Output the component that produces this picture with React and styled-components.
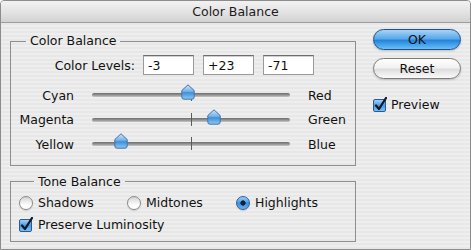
import React from 'react';
import styled, { createGlobalStyle } from 'styled-components';

const GlobalStyle = createGlobalStyle`
  html, body { margin: 0; padding: 0; background: #fff; }
  body { font-family: "DejaVu Sans", "Liberation Sans", sans-serif; font-size: 12px; color: #111; }
`;

const levels = [-3, 23, -71];
const sliders = [
  { left: 'Cyan', right: 'Red', value: -3 },
  { left: 'Magenta', right: 'Green', value: 23 },
  { left: 'Yellow', right: 'Blue', value: -71 },
];

const Window = styled.div`
  width: 471px;
  height: 250px;
  box-sizing: border-box;
  border: 1px solid #8c8c8c;
  border-top-left-radius: 4px;
  border-top-right-radius: 4px;
  overflow: hidden;
  background: repeating-linear-gradient(to bottom, #eeeeee 0 2px, #e7e7e7 2px 4px);
  display: flex;
  flex-direction: column;
`;

const TitleBar = styled.div`
  height: 21px;
  flex: none;
  border-bottom: 1px solid #9c9c9c;
  background: linear-gradient(to bottom, #f2f2f2 0%, #e4e4e4 50%, #d2d2d2 100%);
  display: flex;
  align-items: center;
  justify-content: center;
  font-size: 12.5px;
  color: #1a1a1a;
`;

const Body = styled.div`
  display: flex;
  padding: 11px 0 0 9px;
`;

const LeftColumn = styled.div`
  width: 346px;
  display: flex;
  flex-direction: column;
`;

const Group = styled.fieldset`
  margin: ${p => p.$top || 0}px 0 0 0;
  padding: ${p => p.$pad};
  border: 1px solid #8e8e8e;
  min-width: 0;
`;

const Legend = styled.legend`
  margin-left: 15px;
  padding: 0 4px;
  line-height: 14px;
  font-size: 12.5px;
`;

const LevelsRow = styled.div`
  display: flex;
  align-items: center;
  gap: 9px;
  height: 20px;
`;

const LevelsLabel = styled.span`
  width: 124px;
  margin-right: -1px;
  text-align: right;
  font-size: 12.5px;
`;

const LevelInput = styled.div`
  width: 51px;
  height: 20px;
  box-sizing: border-box;
  background: #fff;
  border: 1px solid #9a9a9a;
  border-top-color: #6e6e6e;
  box-shadow: inset 0 1px 0 #d0d0d0;
  padding: 0 4px;
  display: flex;
  align-items: center;
  font-size: 12.5px;
`;

const SliderGrid = styled.div`
  margin-top: 8px;
  display: grid;
  grid-template-columns: 63px 198px auto;
  column-gap: 18px;
  grid-auto-rows: 24.5px;
  align-items: center;
`;

const SideLabel = styled.span`
  text-align: ${p => (p.$right ? 'left' : 'right')};
  font-size: 12.5px;
`;

const Track = styled.div`
  position: relative;
  height: 4px;
  border-radius: 2px;
  background: linear-gradient(to bottom, #6c6c6c, #9c9c9c 60%, #c8c8c8);
`;

const Tick = styled.div`
  position: absolute;
  left: 99px;
  top: -5px;
  width: 1px;
  height: 13px;
  background: #5a5a5a;
`;

const Thumb = styled.svg`
  position: absolute;
  top: -9px;
  width: 14px;
  height: 16px;
  margin-left: -7px;
`;

const ToneRow = styled.div`
  display: grid;
  grid-template-columns: 108px 109px auto;
  height: 18px;
  align-items: center;
`;

const Choice = styled.label`
  display: flex;
  align-items: center;
  gap: 5px;
  font-size: 12.5px;
  height: 18px;
`;

const Radio = styled.span`
  width: 14px;
  height: 14px;
  border-radius: 50%;
  box-sizing: border-box;
  border: 1px solid ${p => (p.$on ? '#2f5f98' : '#8a8a8a')};
  background: ${p =>
    p.$on
      ? 'radial-gradient(circle at 50% 50%, #10233d 0 2.4px, transparent 2.8px), linear-gradient(to bottom, #9fd0f5, #3b8ee0 55%, #6ab4f3)'
      : 'linear-gradient(to bottom, #d4d4d4, #ffffff 70%)'};
  box-shadow: 0 1px 1px rgba(0,0,0,0.15);
`;

const CheckBox = styled.svg`
  width: 14px;
  height: 15px;
  flex: none;
`;

const RightColumn = styled.div`
  margin: -5px 0 0 17px;
  width: 88px;
  display: flex;
  flex-direction: column;
`;

const AquaButton = styled.div`
  height: 21px;
  box-sizing: border-box;
  border-radius: 11px;
  margin-bottom: 8px;
  display: flex;
  align-items: center;
  justify-content: center;
  font-size: 12.5px;
  color: #111;
  border: 1px solid ${p => (p.$primary ? '#1f4f8c' : '#7c7c7c')};
  background: ${p =>
    p.$primary
      ? 'linear-gradient(to bottom, #a7d4f6 0%, #5aa9ea 45%, #2684dc 55%, #66c0f8 100%)'
      : 'linear-gradient(to bottom, #ffffff 0%, #f2f2f2 45%, #dedede 55%, #fafafa 100%)'};
  box-shadow: 0 1px 2px rgba(0,0,0,0.2);
`;

const PreviewRow = styled(Choice)`
  margin-top: 8px;
  gap: 4px;
`;

const LumaRow = styled(Choice)`
  margin-top: 4px;
`;

function Check() {
  return (
    <CheckBox viewBox="0 0 14 15">
      <defs>
        <linearGradient id="cbg" x1="0" y1="0" x2="0" y2="1">
          <stop offset="0" stopColor="#a9d6f7" />
          <stop offset="0.5" stopColor="#4a9ce6" />
          <stop offset="1" stopColor="#7cc4f7" />
        </linearGradient>
      </defs>
      <rect x="0.5" y="2.5" width="12" height="12" rx="1.5" fill="url(#cbg)" stroke="#2c5a8f" />
      <path d="M3 8.5 L6 12 L13 1" fill="none" stroke="#0d1a2c" strokeWidth="2.3" strokeLinecap="round" strokeLinejoin="round" />
    </CheckBox>
  );
}

function SliderThumb({ x }) {
  return (
    <Thumb viewBox="0 0 14 16" style={{ left: x }}>
      <defs>
        <linearGradient id="thg" x1="0" y1="0" x2="0" y2="1">
          <stop offset="0" stopColor="#cfe7fa" />
          <stop offset="0.45" stopColor="#73b3ea" />
          <stop offset="0.55" stopColor="#3f8fd8" />
          <stop offset="1" stopColor="#8dcaf5" />
        </linearGradient>
      </defs>
      <path d="M7 0.8 L13.2 6.5 V13 Q13.2 15.2 11 15.2 H3 Q0.8 15.2 0.8 13 V6.5 Z" fill="url(#thg)" stroke="#4474a3" strokeWidth="1" />
    </Thumb>
  );
}

export default function App() {
  return (
    <>
      <GlobalStyle />
      <Window>
        <TitleBar>Color Balance</TitleBar>
        <Body>
          <LeftColumn>
            <Group $pad="7px 0 8px 0">
              <Legend>Color Balance</Legend>
              <LevelsRow>
                <LevelsLabel>Color Levels:</LevelsLabel>
                {levels.map((v, i) => (
                  <LevelInput key={i}>{v > 0 ? `+${v}` : `${v}`}</LevelInput>
                ))}
              </LevelsRow>
              <SliderGrid>
                {sliders.map(s => (
                  <React.Fragment key={s.left}>
                    <SideLabel>{s.left}</SideLabel>
                    <Track>
                      <Tick />
                      <SliderThumb x={((s.value + 100) / 200) * 198} />
                    </Track>
                    <SideLabel $right>{s.right}</SideLabel>
                  </React.Fragment>
                ))}
              </SliderGrid>
            </Group>
            <Group $top={9} $pad="5px 0 7px 8px">
              <Legend>Tone Balance</Legend>
              <ToneRow>
                <Choice><Radio />Shadows</Choice>
                <Choice><Radio />Midtones</Choice>
                <Choice><Radio $on />Highlights</Choice>
              </ToneRow>
              <LumaRow><Check />Preserve Luminosity</LumaRow>
            </Group>
          </LeftColumn>
          <RightColumn>
            <AquaButton $primary>OK</AquaButton>
            <AquaButton>Reset</AquaButton>
            <PreviewRow><Check />Preview</PreviewRow>
          </RightColumn>
        </Body>
      </Window>
    </>
  );
}
